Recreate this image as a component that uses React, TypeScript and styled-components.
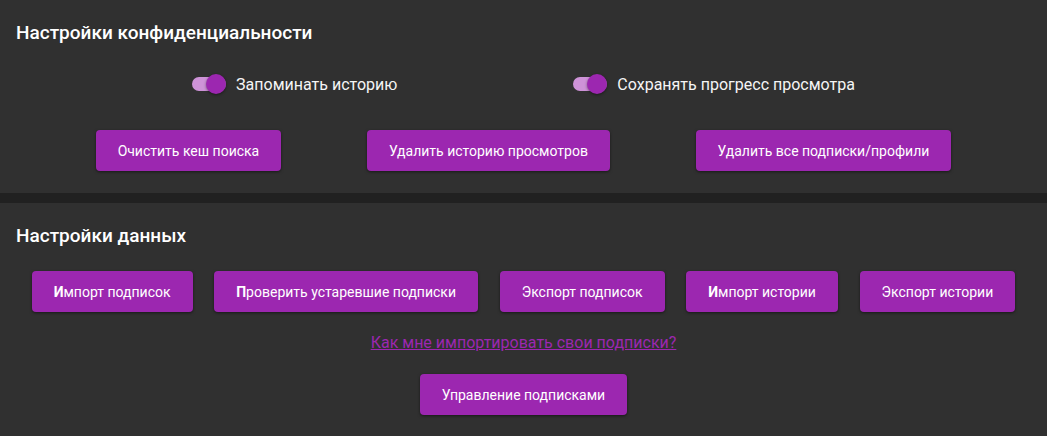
import React, { useState } from 'react';
import styled, { createGlobalStyle } from 'styled-components';

const GlobalStyle = createGlobalStyle`
  html, body {
    margin: 0;
    padding: 0;
    background: #212121;
    font-family: Roboto, "Noto Sans", "Liberation Sans", sans-serif;
    color: #ffffff;
  }
`;

const Page = styled.div`
  display: flex;
  flex-direction: column;
  gap: 10px;
  min-height: 100vh;
`;

const Section = styled.section<{ $grow?: boolean }>`
  background: #303030;
  padding: 22px 16px 16px;
  flex: ${(p) => (p.$grow ? 1 : 'none')};
  display: flex;
  flex-direction: column;
`;

const SectionTitle = styled.h3`
  margin: 0;
  font-size: 19px;
  line-height: 22px;
  font-weight: 500;
  color: #ffffff;
`;

const ToggleRow = styled.div`
  display: flex;
  justify-content: space-evenly;
  align-items: center;
  margin-top: 30px;
  height: 20px;
`;

const ToggleLabel = styled.label`
  display: flex;
  align-items: center;
  gap: 10px;
  font-size: 16px;
  color: #f5f5f5;
  cursor: pointer;
`;

const Track = styled.span<{ $on: boolean }>`
  position: relative;
  width: 34px;
  height: 14px;
  border-radius: 7px;
  background: ${(p) => (p.$on ? '#ce93d8' : '#9e9e9e')};
`;

const Knob = styled.span<{ $on: boolean }>`
  position: absolute;
  top: -3px;
  left: ${(p) => (p.$on ? '14px' : '0')};
  width: 20px;
  height: 20px;
  border-radius: 50%;
  background: ${(p) => (p.$on ? '#9c27b0' : '#f1f1f1')};
  box-shadow: 0 1px 3px rgba(0, 0, 0, 0.45);
`;

const ButtonRow = styled.div<{ $top: number }>`
  display: flex;
  flex-wrap: wrap;
  justify-content: space-evenly;
  margin-top: ${(p) => p.$top}px;
`;

const Button = styled.button`
  margin: 6px;
  height: 41px;
  padding: 0 22px;
  border: none;
  border-radius: 4px;
  background: #9c27b0;
  color: #ffffff;
  font-family: inherit;
  font-size: 14px;
  box-shadow: 0 1px 3px rgba(0, 0, 0, 0.5);
  cursor: pointer;
`;

const Initial = styled.span`
  font-weight: 700;
`;

const LinkRow = styled.div`
  display: flex;
  justify-content: center;
  margin-top: 15px;
`;

const HelpLink = styled.a`
  color: #9c27b0;
  font-size: 16px;
  line-height: 19px;
  text-decoration: underline;
  cursor: pointer;
`;

const Toggle: React.FC<{ label: string; on: boolean; onChange: () => void }> = ({ label, on, onChange }) => (
  <ToggleLabel onClick={onChange}>
    <Track $on={on}>
      <Knob $on={on} />
    </Track>
    {label}
  </ToggleLabel>
);

const App: React.FC = () => {
  const [rememberHistory, setRememberHistory] = useState(true);
  const [saveProgress, setSaveProgress] = useState(true);

  return (
    <>
      <GlobalStyle />
      <Page>
        <Section>
          <SectionTitle>Настройки конфиденциальности</SectionTitle>
          <ToggleRow>
            <Toggle
              label="Запоминать историю"
              on={rememberHistory}
              onChange={() => setRememberHistory(!rememberHistory)}
            />
            <Toggle
              label="Сохранять прогресс просмотра"
              on={saveProgress}
              onChange={() => setSaveProgress(!saveProgress)}
            />
          </ToggleRow>
          <ButtonRow $top={30}>
            <Button>Очистить кеш поиска</Button>
            <Button>Удалить историю просмотров</Button>
            <Button>Удалить все подписки/профили</Button>
          </ButtonRow>
        </Section>

        <Section $grow>
          <SectionTitle>Настройки данных</SectionTitle>
          <ButtonRow $top={18}>
            <Button><Initial>И</Initial>мпорт подписок</Button>
            <Button><Initial>П</Initial>роверить устаревшие подписки</Button>
            <Button>Экспорт подписок</Button>
            <Button><Initial>И</Initial>мпорт истории</Button>
            <Button>Экспорт истории</Button>
          </ButtonRow>
          <LinkRow>
            <HelpLink>Как мне импортировать свои подписки?</HelpLink>
          </LinkRow>
          <ButtonRow $top={16}>
            <Button>Управление подписками</Button>
          </ButtonRow>
        </Section>
      </Page>
    </>
  );
};

export default App;
